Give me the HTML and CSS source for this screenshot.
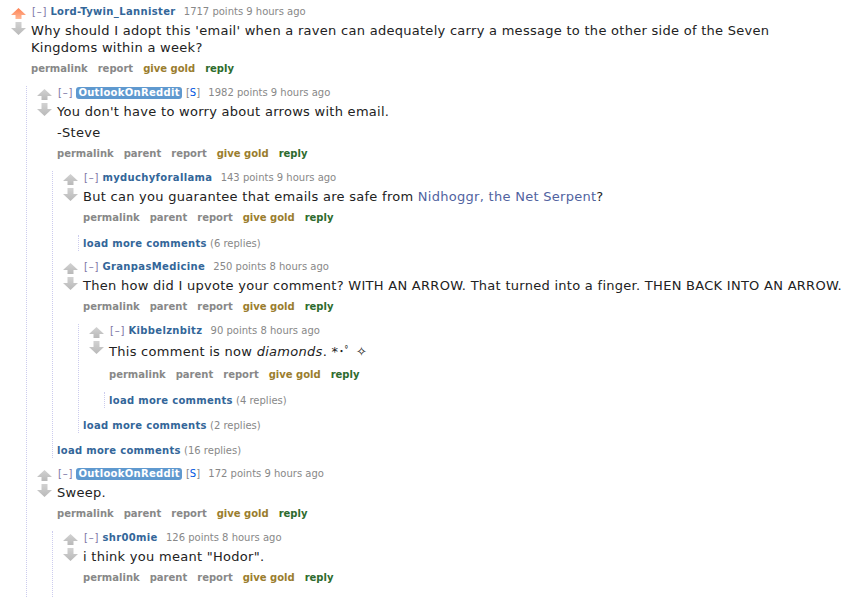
FILE: index.html
```html
<!DOCTYPE html>
<html lang="en">
<head>
<meta charset="utf-8">
<title>Comments</title>
<link rel="stylesheet" href="styles.css">
</head>
<body>
<svg class="defs" width="0" height="0" aria-hidden="true">
  <defs>
    <linearGradient id="gGrey" x1="0" y1="0" x2="0" y2="1">
      <stop offset="0" stop-color="#d2d2d2"/>
      <stop offset="1" stop-color="#b9b9b9"/>
    </linearGradient>
    <linearGradient id="gOrange" x1="0" y1="0" x2="0" y2="1">
      <stop offset="0" stop-color="#ff8153"/>
      <stop offset="1" stop-color="#ffb896"/>
    </linearGradient>
    <path id="pUp" d="M7.5 0 L15 7 L10.5 7 L10.5 11 L4.5 11 L4.5 7 L0 7 Z"/>
    <path id="pDown" d="M4.5 0 L10.5 0 L10.5 6 L15 6 L7.5 13 L0 6 L4.5 6 Z"/>
  </defs>
</svg>

<div class="thread">

  <div class="comment">
    <div class="row">
      <div class="midcol">
        <svg class="arrow up" viewBox="0 0 15 11"><use href="#pUp" fill="url(#gOrange)"/></svg>
        <svg class="arrow down" viewBox="0 0 15 13"><use href="#pDown" fill="url(#gGrey)"/></svg>
      </div>
      <div class="entry">
        <p class="tagline"><span class="expand">[–]</span> <span class="author">Lord-Tywin_Lannister</span> <span class="score">1717 points</span> 9 hours ago</p>
        <div class="md"><p>Why should I adopt this 'email' when a raven can adequately carry a message to the other side of the Seven Kingdoms within a week?</p></div>
        <ul class="buttons"><li>permalink</li><li>report</li><li class="gold">give gold</li><li class="reply">reply</li></ul>
      </div>
    </div>

    <div class="child">

      <div class="comment">
        <div class="row">
          <div class="midcol">
            <svg class="arrow up" viewBox="0 0 15 11"><use href="#pUp" fill="url(#gGrey)"/></svg>
            <svg class="arrow down" viewBox="0 0 15 13"><use href="#pDown" fill="url(#gGrey)"/></svg>
          </div>
          <div class="entry">
            <p class="tagline"><span class="expand">[–]</span> <span class="submitter">OutlookOnReddit</span> <span class="flag">[<span class="s">S</span>]</span> <span class="score">1982 points</span> 9 hours ago</p>
            <div class="md"><p>You don't have to worry about arrows with email.</p><p>-Steve</p></div>
            <ul class="buttons"><li>permalink</li><li>parent</li><li>report</li><li class="gold">give gold</li><li class="reply">reply</li></ul>
          </div>
        </div>

        <div class="child">

          <div class="comment">
            <div class="row">
              <div class="midcol">
                <svg class="arrow up" viewBox="0 0 15 11"><use href="#pUp" fill="url(#gGrey)"/></svg>
                <svg class="arrow down" viewBox="0 0 15 13"><use href="#pDown" fill="url(#gGrey)"/></svg>
              </div>
              <div class="entry">
                <p class="tagline"><span class="expand">[–]</span> <span class="author">myduchyforallama</span> <span class="score">143 points</span> 9 hours ago</p>
                <div class="md"><p>But can you guarantee that emails are safe from <a class="link" href="#">Nidhoggr, the Net Serpent</a>?</p></div>
                <ul class="buttons"><li>permalink</li><li>parent</li><li>report</li><li class="gold">give gold</li><li class="reply">reply</li></ul>
              </div>
            </div>
            <div class="child">
              <div class="morechildren"><span class="more">load more comments</span> <span class="count">(6 replies)</span></div>
            </div>
          </div>

          <div class="comment">
            <div class="row">
              <div class="midcol">
                <svg class="arrow up" viewBox="0 0 15 11"><use href="#pUp" fill="url(#gGrey)"/></svg>
                <svg class="arrow down" viewBox="0 0 15 13"><use href="#pDown" fill="url(#gGrey)"/></svg>
              </div>
              <div class="entry">
                <p class="tagline"><span class="expand">[–]</span> <span class="author">GranpasMedicine</span> <span class="score">250 points</span> 8 hours ago</p>
                <div class="md"><p>Then how did I upvote your comment? WITH AN ARROW. That turned into a finger. THEN BACK INTO AN ARROW.</p></div>
                <ul class="buttons"><li>permalink</li><li>parent</li><li>report</li><li class="gold">give gold</li><li class="reply">reply</li></ul>
              </div>
            </div>
            <div class="child">

              <div class="comment">
                <div class="row">
                  <div class="midcol">
                    <svg class="arrow up" viewBox="0 0 15 11"><use href="#pUp" fill="url(#gGrey)"/></svg>
                    <svg class="arrow down" viewBox="0 0 15 13"><use href="#pDown" fill="url(#gGrey)"/></svg>
                  </div>
                  <div class="entry">
                    <p class="tagline"><span class="expand">[–]</span> <span class="author">Kibbelznbitz</span> <span class="score">90 points</span> 8 hours ago</p>
                    <div class="md sparkle"><p>This comment is now <em>diamonds</em>. *<span class="kana">･ﾟ</span> ✧</p></div>
                    <ul class="buttons"><li>permalink</li><li>parent</li><li>report</li><li class="gold">give gold</li><li class="reply">reply</li></ul>
                  </div>
                </div>
                <div class="child">
                  <div class="morechildren"><span class="more">load more comments</span> <span class="count">(4 replies)</span></div>
                </div>
              </div>

              <div class="morechildren"><span class="more">load more comments</span> <span class="count">(2 replies)</span></div>
            </div>
          </div>

          <div class="morechildren"><span class="more">load more comments</span> <span class="count">(16 replies)</span></div>
        </div>
      </div>

      <div class="comment">
        <div class="row">
          <div class="midcol">
            <svg class="arrow up" viewBox="0 0 15 11"><use href="#pUp" fill="url(#gGrey)"/></svg>
            <svg class="arrow down" viewBox="0 0 15 13"><use href="#pDown" fill="url(#gGrey)"/></svg>
          </div>
          <div class="entry">
            <p class="tagline"><span class="expand">[–]</span> <span class="submitter">OutlookOnReddit</span> <span class="flag">[<span class="s">S</span>]</span> <span class="score">172 points</span> 9 hours ago</p>
            <div class="md"><p>Sweep.</p></div>
            <ul class="buttons"><li>permalink</li><li>parent</li><li>report</li><li class="gold">give gold</li><li class="reply">reply</li></ul>
          </div>
        </div>
        <div class="child">
          <div class="comment last">
            <div class="row">
              <div class="midcol">
                <svg class="arrow up" viewBox="0 0 15 11"><use href="#pUp" fill="url(#gGrey)"/></svg>
                <svg class="arrow down" viewBox="0 0 15 13"><use href="#pDown" fill="url(#gGrey)"/></svg>
              </div>
              <div class="entry">
                <p class="tagline"><span class="expand">[–]</span> <span class="author">shr00mie</span> <span class="score">126 points</span> 8 hours ago</p>
                <div class="md"><p>i think you meant "Hodor".</p></div>
                <ul class="buttons"><li>permalink</li><li>parent</li><li>report</li><li class="gold">give gold</li><li class="reply">reply</li></ul>
              </div>
            </div>
          </div>
        </div>
      </div>

    </div>
  </div>

</div>
</body>
</html>
```

FILE: styles.css
```css
html, body {
  margin: 0;
  padding: 0;
  background: #ffffff;
  overflow: hidden;
}

body {
  font-family: "DejaVu Sans", Verdana, sans-serif;
  color: #222222;
}

.defs {
  position: absolute;
  width: 0;
  height: 0;
}

.thread {
  padding: 5px 0 0 1px;
}

.comment {
  margin-left: 10px;
}

.row {
  display: flex;
  align-items: flex-start;
}

.midcol {
  flex: 0 0 15px;
  width: 15px;
  margin-right: 5px;
  display: flex;
  flex-direction: column;
}

.arrow {
  display: block;
  width: 15px;
}

.arrow.up {
  height: 11px;
  margin-top: 3px;
}

.arrow.down {
  height: 13px;
  margin-top: 3px;
}

.entry {
  flex: 1 1 auto;
  min-width: 0;
}

.tagline {
  margin: 0;
  font-size: 10px;
  line-height: 14px;
  color: #888888;
  white-space: nowrap;
}

.expand {
  color: #7c76a6;
  margin-left: 1px;
  letter-spacing: 0.8px;
}

.author {
  color: #336699;
  font-weight: bold;
  letter-spacing: 0.35px;
}

.submitter {
  display: inline-block;
  background: #5f99cf;
  color: #ffffff;
  font-weight: bold;
  letter-spacing: 0.3px;
  border-radius: 3px;
  padding: 0 2px;
  line-height: 12px;
}

.flag {
  color: #888888;
  margin-left: 1px;
}

.flag .s {
  color: #0055df;
}

.score {
  margin-left: 5px;
}

.md {
  margin-top: 3px;
  max-width: 780px;
  font-size: 13px;
  line-height: 17px;
  letter-spacing: 0.28px;
  color: #222222;
}

.md p {
  margin: 0;
}

.md p + p {
  margin-top: 4px;
}

.md.sparkle {
  margin-top: 5px;
  padding-bottom: 2px;
}

.kana {
  font-family: "DejaVu Sans", "Noto Sans CJK JP", sans-serif;
}

.link {
  color: #51639f;
  text-decoration: none;
}

.buttons {
  list-style: none;
  margin: 6px 0 0 0;
  padding: 0;
  display: flex;
  gap: 10px;
  font-size: 10px;
  line-height: 14px;
  font-weight: bold;
  color: #888888;
}

.buttons .gold {
  color: #9a7d2e;
}

.buttons .reply {
  color: #2d6b2d;
}

.child {
  margin-top: 10px;
  margin-left: 15px;
  border-left: 1px dotted #ccccee;
}

.child > * + * {
  margin-top: 9px;
}

.morechildren {
  padding: 2px 0 0 4px;
  font-size: 10px;
  line-height: 14px;
}

.more {
  color: #336699;
  font-weight: bold;
  letter-spacing: 0.3px;
}

.count {
  color: #888888;
}

.comment.last {
  padding-bottom: 30px;
}
```
